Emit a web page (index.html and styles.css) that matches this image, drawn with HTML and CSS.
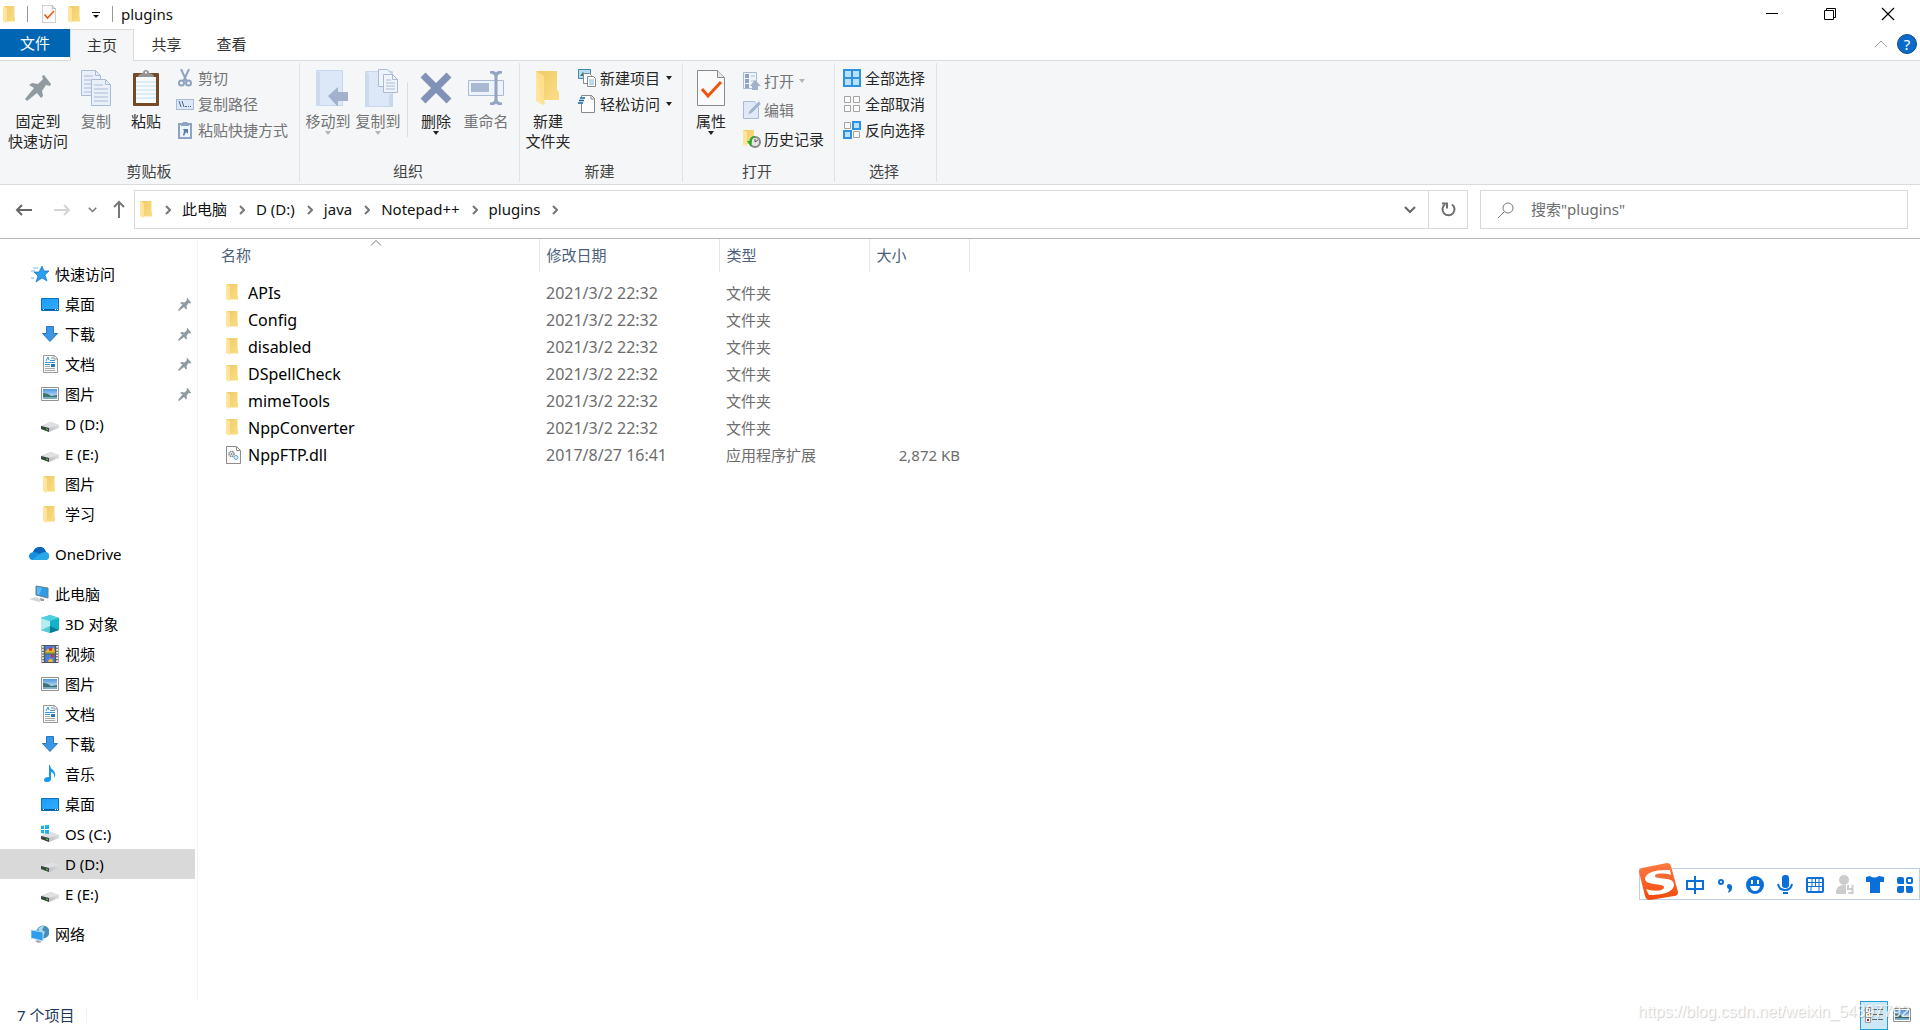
FILE: index.html
```html
<!DOCTYPE html>
<html lang="zh-CN">
<head>
<meta charset="utf-8">
<meta name="viewport" content="width=device-width, initial-scale=1">
<title>plugins</title>
<link rel="stylesheet" href="styles.css">
</head>
<body>
<svg class="sprite" aria-hidden="true">
  <defs>
    <linearGradient id="g-fold" x1="0" x2="1" y1="0" y2="1"><stop offset="0" stop-color="#efcb68"/><stop offset="1" stop-color="#fbdd85"/></linearGradient>
    <linearGradient id="g-blue" x1="0" x2="1" y1="0" y2="1"><stop offset="0" stop-color="#1a9bfa"/><stop offset="1" stop-color="#35adff"/></linearGradient>
    <linearGradient id="g-sky" x1="0" x2="0" y1="0" y2="1"><stop offset="0" stop-color="#4d97e0"/><stop offset="1" stop-color="#e8f4fb"/></linearGradient>
    <linearGradient id="g-drive" x1="0" x2="1" y1="0" y2="0"><stop offset="0" stop-color="#a5a6aa"/><stop offset="1" stop-color="#dcdde0"/></linearGradient>
    <linearGradient id="g-orange" x1="0" x2="0" y1="0" y2="1"><stop offset="0" stop-color="#ff7a42"/><stop offset="1" stop-color="#f04a0c"/></linearGradient>
  </defs>
  <symbol id="folder" viewBox="0 0 12 17"><path d="M1 0h10.500v11l.5.500v4H3z" fill="url(#g-fold)"/><path d="M0 0l4 2v12.500l-1 2.500L0 15z" fill="#ffe59c"/></symbol>
  <symbol id="bigfolder" viewBox="0 0 24 35"><path d="M0 0h21v19l2 2v8H5z" fill="url(#g-fold)"/><path d="M0 0l8 5v24l-1 5-7-4z" fill="#ffe59c"/><path d="M0 0l8 5v24l2 4-3 1z" fill="#fbd97c" opacity=".5"/></symbol>
  <symbol id="checkdoc" viewBox="0 0 28 36"><path d="M.5.500h20l7 7v28H.5z" fill="#fafafa" stroke="#8b8b8b"/><path d="M20.500.500v7h7" fill="#e6e6e6" stroke="#8b8b8b"/><path d="M5 19l6 7 13-14" fill="none" stroke="#ef5310" stroke-width="3"/></symbol>
  <symbol id="pin" viewBox="0 0 26 26"><path d="M0 24l9-11-5-3 3-2 6 1 5-5-1-3 2-1 7 9-1 2-4-1-4 6 1 5-2 2-4-5L2 26z" fill="#8f9ba1"/></symbol>
  <symbol id="copy" viewBox="0 0 30 36"><g fill="#e9f0fa" stroke="#a9bad5"><path d="M.5.500h14l5 5v20H.5z"/><path d="M14.500.500v5h5M3 6h9M3 10h13M3 14h13M3 18h13M3 22h13" fill="none"/><path d="M10.500 9.500h14l5 5v21h-19z"/><path d="M24.500 9.500v5h5M13 15h9M13 19h14M13 23h14M13 27h14M13 31h14" fill="none"/></g></symbol>
  <symbol id="paste" viewBox="0 0 26 36"><rect y="3" width="26" height="33" rx="1" fill="#754a25"/><path d="M3 7h20v26H3z" fill="#f9fcff"/><path d="M3 12h20M3 16h20M3 20h20M3 24h20M3 28h20" stroke="#b9dff5"/><path d="M5 7q0-3 5-4 0-3 3-3t3 3q5 1 5 4z" fill="#949494"/><circle cx="13" cy="2.500" r="1" fill="#fff"/></symbol>
  <symbol id="cut" viewBox="0 0 18 18"><g fill="none" stroke="#8ea3c2" stroke-width="2"><path d="M5 0l5.500 12M13 0L7.500 12"/><circle cx="5.500" cy="14" r="2.500"/><circle cx="12.500" cy="14" r="2.500"/></g></symbol>
  <symbol id="path" viewBox="0 0 18 18"><rect x=".5" y="4.500" width="17" height="10" fill="#dce7f7" stroke="#a9bad5"/><path d="M3 6l2 6M6 6l2 6M9 11.500h2M12 11.500h1M14 11.500h1" stroke="#47658f"/></symbol>
  <symbol id="shortcut" viewBox="0 0 18 18"><rect x="3" y="3" width="12" height="14" fill="#eef4fc" stroke="#8ea3c2" stroke-width="2"/><path d="M5 3l2-2h4l2 2v2H5z" fill="#8ea3c2"/><path d="M7 8h5v5l-2-2-2 4-1-1 1-4z" fill="#5a7dae"/></symbol>
  <symbol id="moveto" viewBox="0 0 32 36"><path d="M.5.500h26v35H.5z" fill="#dce7f7" stroke="#c9d7ec"/><path d="M0 0l4 3v33H0z" fill="#ccdaee"/><path d="M12 26l10-9v5h10v9H22v6z" fill="#a2b2cc"/></symbol>
  <symbol id="copyto" viewBox="0 0 34 38"><path d="M.5 2.500h27v35H.5z" fill="#dce7f7" stroke="#c9d7ec"/><path d="M0 2l4 3v33H0z" fill="#ccdaee"/><path d="M24 28q0-3 2-3t2 3v10h-4z" fill="#c9d7ec"/><g fill="#eff4fb" stroke="#a9bad5"><path d="M13.500.500h9l4 4v13h-13z"/><path d="M18.500 5.500h9l5 5v13h-14zM27.500 5.500v5h5M21 11h5M21 14h9M21 17h9M21 20h9"/></g></symbol>
  <symbol id="delete" viewBox="0 0 32 32"><path d="M3 3l26 26M29 3L3 29" stroke="#8093b7" stroke-width="7" /></symbol>
  <symbol id="rename" viewBox="0 0 36 34"><path d="M.5 9.500h35v15H.5z" fill="#edf3fc" stroke="#a9bad5"/><path d="M3 12h18v9H3z" fill="#a9b9d4"/><path d="M22 1q6 0 6 5v22q0 5-6 5M34 1q-6 0-6 5v22q0 5 6 5" fill="none" stroke="#91a5c3" stroke-width="3"/></symbol>
  <symbol id="newitem" viewBox="0 0 18 18"><path d="M.5.500h12v9H.5z" fill="#b6ddf3" stroke="#3e88ae"/><path d="M2 7l3-4 3 4z" fill="#3d7c60"/><path d="M5.500 4.500h6l2 2v8h-8z" fill="#fff" stroke="#888"/><path d="M9.500 7.500h6l2 2v8h-8z" fill="#fff" stroke="#888"/><path d="M11 11h5M11 13h5M11 15h5" stroke="#74b4e4"/></symbol>
  <symbol id="easy" viewBox="0 0 18 18"><path d="M3.500.500h10l3 3v14h-13z" fill="#fdfdfd" stroke="#888"/><path d="M13 0v4h4" fill="none" stroke="#888"/><path d="M0 5.500h5" stroke="#f5f6f7" stroke-width="7"/><path d="M2 3h5M1 5.500h5M0 8h5" stroke="#1463a5" stroke-width="1.500"/></symbol>
  <symbol id="open" viewBox="0 0 18 18"><path d="M.5.500h13v16H.5z" fill="#eff4fb" stroke="#a9bad5"/><path d="M2 2h4v4H2zM2 7h4v4H2zM2 12h4v4H2z" fill="#91a5c3"/><path d="M8 4h4M8 9h4" stroke="#a9bad5"/><path d="M12 8l6 6h-3v4H9v-4H7z" fill="#a0b1cc"/></symbol>
  <symbol id="edit" viewBox="0 0 18 18"><path d="M.5.500h11l4 4v13H.5z" fill="#dfe9f7" stroke="#a9bad5"/><path d="M5 14l1-4L16 0l2 3L9 12z" fill="#a0b4d0" stroke="#eef4fc" stroke-width=".5"/></symbol>
  <symbol id="history" viewBox="0 0 18 18"><path d="M0 0h11v14H3z" fill="url(#g-fold)"/><path d="M0 0l4 2v14l-4-1z" fill="#ffe59c"/><circle cx="12" cy="12" r="5" fill="#e6e6e6" stroke="#888" stroke-width="2"/><path d="M12 9v3l3-2" fill="none" stroke="#555"/><path d="M12 6q-5 0-5 5H4l4 6 1-6q0-3 3-4z" fill="#28ac2c"/></symbol>
  <symbol id="selall" viewBox="0 0 18 18"><path d="M1 1h16v16H1zM9 0v18M0 9h18" fill="#b7e1ff" stroke="#2d92e3" stroke-width="2"/></symbol>
  <symbol id="selnone" viewBox="0 0 18 18"><path d="M1.500 1.500h6v6h-6zM10.500 1.500h6v6h-6zM1.500 10.500h6v6h-6zM10.500 10.500h6v6h-6z" fill="#f9f9f9" stroke="#a3a3a3"/></symbol>
  <symbol id="selinv" viewBox="0 0 18 18"><path d="M1.500 1.500h6v6h-6zM10.500 10.500h6v6h-6z" fill="#f9f9f9" stroke="#a3a3a3"/><path d="M10 1h7v7h-7zM1 10h7v7H1z" fill="#b7e1ff" stroke="#2d92e3" stroke-width="2"/></symbol>
  <symbol id="star" viewBox="0 0 18 18"><path d="M11 1l2 5h5l-4 4 2 6-5-3-6 4 2-6-4-4h5z" fill="#2b9ef0" stroke="#1577be" stroke-width=".7"/><path d="M2 3h5M0 6h4M0 13h3" stroke="#69bdf5"/></symbol>
  <symbol id="desktop" viewBox="0 0 18 18"><path d="M.5 3.500h17v12H.5z" fill="url(#g-blue)" stroke="#0a72bd"/><path d="M1 14.500h16" stroke="#075b9d"/><path d="M2 14.500h1M14 14.500h1M16 14.500h1" stroke="#fff"/></symbol>
  <symbol id="down" viewBox="0 0 18 18"><path d="M5.500 1.500h7v7h4L9 16.500 1.500 8.500h4z" fill="#3b96e5" stroke="#2879c2"/></symbol>
  <symbol id="doc" viewBox="0 0 18 18"><path d="M2.500.500h11l3 3v14h-14z" fill="#fafafa" stroke="#999"/><path d="M13 0v4h4" fill="none" stroke="#999"/><path d="M5 6l2-4 1 3M10 3h2M9 5.500h5M4 7.500h10M4 9.500h5" stroke="#3a97d8" fill="none"/><path d="M4 11.500h5M4 13.500h10M4 15.500h10" stroke="#aaa"/><path d="M10 9h4v3h-4z" fill="#2879b9"/></symbol>
  <symbol id="picture" viewBox="0 0 18 18"><path d="M.5 2.500h17v13H.5z" fill="#fff" stroke="#929292"/><path d="M2 4h14v10H2z" fill="url(#g-sky)"/><path d="M2 8q5 0 8 3l6-1v4H2z" fill="#3c756e"/><path d="M2 12h14v2H2z" fill="#7aaec5"/></symbol>
  <symbol id="drive" viewBox="0 0 18 18"><path d="M0 11l10-4 8 3v3l-10 4-8-3z" fill="url(#g-drive)"/><path d="M0 11l10-4 8 3-10 3z" fill="#e0e1e4"/><path d="M0 11l8 2v4l-8-3z" fill="#3e4441"/><path d="M5 14l2 .5" stroke="#3fdc45"/></symbol>
  <symbol id="osdrive" viewBox="0 0 18 18"><use href="#drive"/><path d="M0 1l3-.5V4H0zM4 .3L8 0v4H4zM0 5h3v3.500l-3-.5zM4 5h4v4l-4-.5z" fill="#14b5ef"/></symbol>
  <symbol id="cloud" viewBox="0 0 20 14"><path d="M4 13q-4 0-4-4 0-3 4-4 2-5 7-5 4 0 6 5 3 1 3 4 0 4-4 4z" fill="#1490df"/><path d="M4 5q2-5 7-5 4 0 6 5-4 0-6 2-3-2-7-2z" fill="#0a64ba"/><path d="M3 13l8-6q3-2 6-2 3 1 3 4 0 4-4 4z" fill="#28a8ea"/></symbol>
  <symbol id="pc" viewBox="0 0 20 18"><path d="M7 1l12 2v10L7 10z" fill="#2e9ce9" stroke="#6c7f8b"/><path d="M8 2l5 1-3 7-2-1z" fill="#5abdf7"/><path d="M0 14l7-2 7 3-4 2z" fill="#d3d5d7"/><path d="M11 13l4 1v2h-3z" fill="#999"/></symbol>
  <symbol id="cube" viewBox="0 0 18 18"><path d="M9 0l9 3v12l-9 3-9-3V3z" fill="#12b2cb"/><path d="M0 3l9 3v12l-9-3z" fill="#b4eef2"/><path d="M9 0l9 3-9 3-9-3z" fill="#4fd0df"/><path d="M9 11l9 4-9 3z" fill="#087e95"/><path d="M9 11l-9 4 9 3z" fill="#57cbd5"/></symbol>
  <symbol id="film" viewBox="0 0 18 19"><path d="M0 0h18v19H0z" fill="#555"/><path d="M1.500 1v18M16.500 1v18" stroke="#eee" stroke-width="2" stroke-dasharray="2 1"/><path d="M4 1h10v8H4zM4 10h10v8H4z" fill="#4b7fe2"/><path d="M4 7l3-3 3 2 3-4 1 4v3H4zM7 17q2-5 5-1v2H7z" fill="#f0b629"/><path d="M8 3h3v3H8zM10 10h3v3h-3z" fill="#c7392c"/><path d="M4 8h10v1H4z" fill="#3e8b36"/></symbol>
  <symbol id="music" viewBox="0 0 18 18"><path d="M9 0q0 3 3 5 4 4 1 8 1-5-3-6v7q0 3-4 3-3 0-3-2 0-3 5-3V0z" fill="#1799f0"/></symbol>
  <symbol id="network" viewBox="0 0 18 18"><circle cx="12" cy="7" r="6.500" fill="#478fb6"/><path d="M7 4q4-4 6-3l-2 4 3 2-2 4z" fill="#a9dcec"/><path d="M0 5l12 2v9L0 13z" fill="#2f9ced" stroke="#b6dcf0"/><path d="M4 16l3-1 4 2-4 1z" fill="#aaa"/></symbol>
  <symbol id="dll" viewBox="0 0 15 18"><path d="M.5.500h10l4 4v13H.5z" fill="#fafafa" stroke="#8b8b8b"/><path d="M10.500.500v4h4" fill="none" stroke="#8b8b8b"/><circle cx="5.500" cy="8" r="2.500" fill="none" stroke="#858b90" stroke-width="1.500" stroke-dasharray="1.500 .5"/><circle cx="5.500" cy="8" r="1" fill="#858b90"/><circle cx="10" cy="11.500" r="2" fill="#d6edfb" stroke="#6ca9d1"/></symbol>
  <symbol id="chev" viewBox="0 0 6 10"><path d="M1 1l4 4-4 4" fill="none" stroke="#777" stroke-width="2"/></symbol>
  <symbol id="vchev" viewBox="0 0 12 8"><path d="M1 1l5 5 5-5" fill="none" stroke="currentColor" stroke-width="2"/></symbol>
</svg>

<header class="titlebar">
  <div class="quick">
    <svg class="ic-folder"><use href="#folder"/></svg>
    <span class="tsep"></span>
    <button class="plain" aria-label="属性"><svg class="ic-check"><use href="#checkdoc"/></svg></button>
    <button class="plain" aria-label="新建文件夹"><svg class="ic-folder"><use href="#folder"/></svg></button>
    <button class="plain qmenu" aria-label="自定义快速访问工具栏"><svg width="8" height="7"><path d="M0 1.500h8" stroke="#111"/><path d="M1 4h6L4 7z" fill="#111"/></svg></button>
    <span class="tsep"></span>
  </div>
  <h1>plugins</h1>
  <div class="winctl">
    <button class="plain" aria-label="最小化"><svg width="12" height="12"><path d="M0 5.500h12" stroke="#000"/></svg></button>
    <button class="plain" aria-label="还原"><svg width="12" height="12"><path d="M.5 2.500h9v9h-9zM2.500 2.500v-2h9v9h-2" fill="none" stroke="#000"/></svg></button>
    <button class="plain" aria-label="关闭"><svg width="12" height="12"><path d="M0 0l12 12M12 0L0 12" stroke="#000" stroke-width="1.200"/></svg></button>
  </div>
</header>

<nav class="tabs">
  <button class="tab file">文件</button>
  <button class="tab active">主页</button>
  <button class="tab">共享</button>
  <button class="tab">查看</button>
  <div class="tabs-end">
    <button class="plain" aria-label="最小化功能区"><svg width="12" height="8"><path d="M0 7l6-6 6 6" fill="none" stroke="#999"/></svg></button>
    <button class="help" aria-label="帮助">?</button>
  </div>
</nav>

<section class="ribbon">
  <div class="group clip">
    <div class="tools">
      <button class="big pinb"><span class="slot"><svg width="26" height="26"><use href="#pin"/></svg></span>固定到<br>快速访问</button>
      <button class="big copyb off"><span class="slot"><svg width="30" height="36"><use href="#copy"/></svg></span>复制</button>
      <button class="big pasteb"><span class="slot"><svg width="26" height="36"><use href="#paste"/></svg></span>粘贴</button>
      <div class="smalls">
        <button class="small off"><svg><use href="#cut"/></svg>剪切</button>
        <button class="small off"><svg><use href="#path"/></svg>复制路径</button>
        <button class="small off"><svg><use href="#shortcut"/></svg>粘贴快捷方式</button>
      </div>
    </div>
    <div class="caption">剪贴板</div>
  </div>
  <div class="group org">
    <div class="tools">
      <button class="big off"><span class="slot wideslot"><svg width="32" height="36"><use href="#moveto"/></svg></span>移动到<i class="arrow"></i></button>
      <button class="big off"><span class="slot wideslot"><svg width="34" height="38"><use href="#copyto"/></svg></span>复制到<i class="arrow"></i></button>
      <span class="rule"></span>
      <button class="big"><span class="slot"><svg width="32" height="32"><use href="#delete"/></svg></span>删除<i class="arrow"></i></button>
      <button class="big off"><span class="slot"><svg width="36" height="34"><use href="#rename"/></svg></span>重命名</button>
    </div>
    <div class="caption">组织</div>
  </div>
  <div class="group new">
    <div class="tools">
      <button class="big"><span class="slot"><svg width="24" height="35"><use href="#bigfolder"/></svg></span>新建<br>文件夹</button>
      <div class="smalls">
        <button class="small"><svg><use href="#newitem"/></svg>新建项目<i class="arrow"></i></button>
        <button class="small"><svg><use href="#easy"/></svg>轻松访问<i class="arrow"></i></button>
      </div>
    </div>
    <div class="caption">新建</div>
  </div>
  <div class="group opn">
    <div class="tools">
      <button class="big"><span class="slot"><svg width="28" height="36"><use href="#checkdoc"/></svg></span>属性<i class="arrow"></i></button>
      <div class="smalls roomy">
        <button class="small off"><svg><use href="#open"/></svg>打开<i class="arrow"></i></button>
        <button class="small off"><svg><use href="#edit"/></svg>编辑</button>
        <button class="small"><svg><use href="#history"/></svg>历史记录</button>
      </div>
    </div>
    <div class="caption">打开</div>
  </div>
  <div class="group sel">
    <div class="tools">
      <div class="smalls">
        <button class="small"><svg><use href="#selall"/></svg>全部选择</button>
        <button class="small"><svg><use href="#selnone"/></svg>全部取消</button>
        <button class="small"><svg><use href="#selinv"/></svg>反向选择</button>
      </div>
    </div>
    <div class="caption">选择</div>
  </div>
</section>

<div class="navbar">
  <div class="history">
    <button class="plain" aria-label="返回"><svg width="16" height="12"><path d="M16 6H1M6 1L1 6l5 5" fill="none" stroke="#666" stroke-width="2"/></svg></button>
    <button class="plain" aria-label="前进"><svg width="16" height="12"><path d="M0 6h15M10 1l5 5-5 5" fill="none" stroke="#d5d5d5" stroke-width="2"/></svg></button>
    <button class="plain recent" aria-label="最近浏览的位置"><svg width="9" height="6"><use href="#vchev"/></svg></button>
    <button class="plain up" aria-label="上移"><svg width="12" height="17"><path d="M6 17V1M1 6l5-5 5 5" fill="none" stroke="#777" stroke-width="2"/></svg></button>
  </div>
  <div class="address">
    <svg class="ic-folder"><use href="#folder"/></svg>
    <svg class="crumb-sep"><use href="#chev"/></svg><a href="#">此电脑</a>
    <svg class="crumb-sep"><use href="#chev"/></svg><a href="#">D (D:)</a>
    <svg class="crumb-sep"><use href="#chev"/></svg><a href="#">java</a>
    <svg class="crumb-sep"><use href="#chev"/></svg><a href="#">Notepad++</a>
    <svg class="crumb-sep"><use href="#chev"/></svg><a href="#">plugins</a>
    <svg class="crumb-sep"><use href="#chev"/></svg>
    <button class="plain drop" aria-label="以前的位置"><svg width="12" height="8"><use href="#vchev"/></svg></button>
    <button class="plain refresh" aria-label="刷新"><svg width="16" height="16"><path d="M12 2.500a6 6 0 1 1-7 0" fill="none" stroke="#6e6e6e" stroke-width="2"/><path d="M2 1.500h5v5" fill="none" stroke="#6e6e6e" stroke-width="2"/></svg></button>
  </div>
  <label class="search">
    <svg width="16" height="16"><circle cx="10" cy="6" r="5" fill="none" stroke="#777"/><path d="M6.500 9.500L0 16" stroke="#777"/></svg>
    <input type="text" placeholder='搜索"plugins"' aria-label="搜索">
  </label>
</div>

<main class="body">
  <nav class="tree">
    <ul>
      <li><a href="#" class="root"><svg><use href="#star"/></svg>快速访问</a></li>
      <li><a href="#"><svg><use href="#desktop"/></svg>桌面<svg class="pinned"><use href="#pin"/></svg></a></li>
      <li><a href="#"><svg><use href="#down"/></svg>下载<svg class="pinned"><use href="#pin"/></svg></a></li>
      <li><a href="#"><svg><use href="#doc"/></svg>文档<svg class="pinned"><use href="#pin"/></svg></a></li>
      <li><a href="#"><svg><use href="#picture"/></svg>图片<svg class="pinned"><use href="#pin"/></svg></a></li>
      <li><a href="#"><svg><use href="#drive"/></svg>D (D:)</a></li>
      <li><a href="#"><svg><use href="#drive"/></svg>E (E:)</a></li>
      <li><a href="#"><svg class="ic-folder"><use href="#folder"/></svg>图片</a></li>
      <li><a href="#"><svg class="ic-folder"><use href="#folder"/></svg>学习</a></li>
    </ul>
    <ul>
      <li><a href="#" class="root wide"><svg class="ic-cloud"><use href="#cloud"/></svg>OneDrive</a></li>
    </ul>
    <ul>
      <li><a href="#" class="root wide"><svg><use href="#pc"/></svg>此电脑</a></li>
      <li><a href="#"><svg><use href="#cube"/></svg>3D 对象</a></li>
      <li><a href="#"><svg><use href="#film"/></svg>视频</a></li>
      <li><a href="#"><svg><use href="#picture"/></svg>图片</a></li>
      <li><a href="#"><svg><use href="#doc"/></svg>文档</a></li>
      <li><a href="#"><svg><use href="#down"/></svg>下载</a></li>
      <li><a href="#"><svg><use href="#music"/></svg>音乐</a></li>
      <li><a href="#"><svg><use href="#desktop"/></svg>桌面</a></li>
      <li><a href="#"><svg><use href="#osdrive"/></svg>OS (C:)</a></li>
      <li><a href="#" class="current"><svg><use href="#drive"/></svg>D (D:)</a></li>
      <li><a href="#"><svg><use href="#drive"/></svg>E (E:)</a></li>
    </ul>
    <ul>
      <li><a href="#" class="root"><svg><use href="#network"/></svg>网络</a></li>
    </ul>
  </nav>
  <section class="files">
    <table>
      <colgroup><col class="c-name"><col class="c-date"><col class="c-type"><col class="c-size"></colgroup>
      <thead><tr>
        <th class="sorted">名称<svg class="sort" width="10" height="6"><path d="M0 5.500l5-5 5 5" fill="none" stroke="#777"/></svg></th>
        <th>修改日期</th><th>类型</th><th>大小</th>
      </tr></thead>
      <tbody>
        <tr><td><span class="name"><svg class="ic-folder"><use href="#folder"/></svg>APIs</span></td><td class="date">2021/3/2 22:32</td><td>文件夹</td><td></td></tr>
        <tr><td><span class="name"><svg class="ic-folder"><use href="#folder"/></svg>Config</span></td><td class="date">2021/3/2 22:32</td><td>文件夹</td><td></td></tr>
        <tr><td><span class="name"><svg class="ic-folder"><use href="#folder"/></svg>disabled</span></td><td class="date">2021/3/2 22:32</td><td>文件夹</td><td></td></tr>
        <tr><td><span class="name"><svg class="ic-folder"><use href="#folder"/></svg>DSpellCheck</span></td><td class="date">2021/3/2 22:32</td><td>文件夹</td><td></td></tr>
        <tr><td><span class="name"><svg class="ic-folder"><use href="#folder"/></svg>mimeTools</span></td><td class="date">2021/3/2 22:32</td><td>文件夹</td><td></td></tr>
        <tr><td><span class="name"><svg class="ic-folder"><use href="#folder"/></svg>NppConverter</span></td><td class="date">2021/3/2 22:32</td><td>文件夹</td><td></td></tr>
        <tr><td><span class="name"><svg class="ic-dll"><use href="#dll"/></svg>NppFTP.dll</span></td><td class="date">2017/8/27 16:41</td><td>应用程序扩展</td><td>2,872 KB</td></tr>
      </tbody>
    </table>
  </section>
</main>

<footer class="status">
  <span class="count">7 个项目</span>
  <div class="views">
    <button class="view on" aria-label="详细信息"><svg width="18" height="18"><path d="M.5 1.500h5v5h-5zM.5 6.500h5v5h-5zM.5 11.500h5v5h-5z" fill="#fff" stroke="#999"/><path d="M2 3h2v2H2z" fill="#4b9cdb"/><path d="M2 8h2v2H2z" fill="#b98b3c"/><path d="M2 13h2v2H2z" fill="#b5281e"/><path d="M7 3.500h5M13 3.500h5M7 8.500h5M13 8.500h5M7 13.500h5M13 13.500h5" stroke="#666"/></svg></button>
    <button class="view" aria-label="大图标"><svg width="18" height="18"><use href="#picture"/></svg></button>
  </div>
  <span class="watermark">https://blog.csdn.net/weixin_54397792</span>
</footer>

<div class="ime">
  <svg class="ime-logo" viewBox="0 0 40 38"><path d="M3 5L28 0q3 0 4 3l7 26q0 4-4 4l-24 4q-4 0-5-4L0 9q0-3 3-4z" fill="url(#g-orange)"/><path d="M32 12L31 7Q9 6 6 15c-1 8 19 5 19 9 0 5-12 4-18 2l3 6c12 0 24-2 25-10 1-9-19-5-19-9 0-3 10-3 16-1z" fill="#fff"/></svg>
  <button class="plain" aria-label="中文"><svg viewBox="0 0 20 20"><path d="M2 6h16v8H2zM10 1v18" fill="none" stroke="#0a6fd8" stroke-width="2"/></svg></button>
  <button class="plain" aria-label="标点"><svg viewBox="0 0 20 20"><circle cx="6" cy="7" r="2" fill="none" stroke="#0a6fd8" stroke-width="2"/><path d="M12 11q0-2 2-2t3 2q1 5-4 7l1-4q-2 0-2-3z" fill="#0a6fd8"/></svg></button>
  <button class="plain" aria-label="表情"><svg viewBox="0 0 20 20"><circle cx="10" cy="10" r="9" fill="#0a6fd8"/><path d="M5 11h10q-1 5-5 5t-5-5z" fill="#fff"/><path d="M7 5v4M13 5v4" stroke="#fff" stroke-width="2"/></svg></button>
  <button class="plain" aria-label="语音"><svg viewBox="0 0 20 20"><rect x="7" y="0" width="7" height="13" rx="3" fill="#0a6fd8"/><path d="M3 9q1 6 7 6t7-6" fill="none" stroke="#0a6fd8" stroke-width="2"/><path d="M8 17h5v2H8z" fill="#0a6fd8"/></svg></button>
  <button class="plain" aria-label="键盘"><svg viewBox="0 0 20 20"><rect x="2" y="3" width="16" height="14" rx="1" fill="#fff" stroke="#0a6fd8" stroke-width="2"/><path d="M3 7.500h14M3 11.500h14M7 4v8M10.500 4v8M14 4v8M6 12v4M14 12v4" stroke="#0a6fd8"/></svg></button>
  <button class="plain" aria-label="账号"><svg viewBox="0 0 20 20"><circle cx="9" cy="5" r="5" fill="#ccc"/><path d="M1 18q0-8 8-8 5 0 6 4v5H2z" fill="#ccc"/><path d="M11 9h8v10h-8z" fill="#fff"/><path d="M13 10v4h4M17.500 10v8h-4" fill="none" stroke="#ccc" stroke-width="2"/></svg></button>
  <button class="plain" aria-label="皮肤"><svg viewBox="0 0 20 20"><path d="M5 1q4 3 9 0l5 1v5h-4v11H5V7H1V2z" fill="#0a6fd8"/></svg></button>
  <button class="plain" aria-label="工具箱"><svg viewBox="0 0 20 20"><g fill="#0a6fd8"><path d="M2 4q0-2 2-2h3q2 0 2 2v5H4q-2 0-2-2zM2 13q0-2 2-2h5v5q0 2-2 2H4q-2 0-2-2zM11 11h5q2 0 2 2v3q0 2-2 2h-3q-2 0-2-2z"/></g><rect x="12" y="3" width="5" height="5" rx="1" fill="none" stroke="#0a6fd8" stroke-width="2"/></svg></button>
</div>
</body>
</html>
```

FILE: styles.css
```css
* { box-sizing: border-box; }

body {
  margin: 0;
  min-height: 100vh;
  display: flex;
  flex-direction: column;
  position: relative;
  background: #fff;
  color: #111;
  font: 15px/20px "Noto Sans", "Noto Sans CJK SC", sans-serif;
}

button, input { font: inherit; color: inherit; }
button { border: 0; background: none; padding: 0; margin: 0; }
a { color: inherit; text-decoration: none; }
svg { display: block; flex: none; overflow: visible; }
ul { list-style: none; margin: 0; padding: 0; }
.sprite { position: absolute; width: 0; height: 0; }
.plain { display: flex; align-items: center; justify-content: center; }
.ic-folder { width: 12px; height: 17px; }
.ic-check { width: 14px; height: 18px; }
.ic-dll { width: 15px; height: 18px; }

/* title bar */
.titlebar { display: flex; align-items: center; height: 29px; padding-bottom: 1px; }
.quick { display: flex; align-items: center; padding-left: 3px; gap: 12px; }
.quick .tsep + button { margin-left: 2px; }
.qmenu { width: 8px; }
.tsep { width: 1px; height: 16px; background: #999; }
.titlebar h1 { margin: 0 0 0 8px; padding-bottom: 1px; font-size: 15px; font-weight: 400; line-height: 20px; }
.winctl { display: flex; margin-left: auto; padding-right: 3px; }
.winctl button { width: 58px; height: 28px; }

/* ribbon tabs */
.tabs { display: flex; height: 32px; border-bottom: 1px solid #dadbdc; color: #333; }
.tab { width: 65px; height: 31px; padding-bottom: 2px; }
.tab.file { width: 70px; height: 28px; padding: 0; background: #0066b4; color: #fff; }
.tab.active { width: 64px; height: 32px; background: #f5f6f7; border: 1px solid #dadbdc; border-bottom: 0; }
.tabs-end { display: flex; align-items: center; gap: 10px; margin-left: auto; padding: 0 3px 2px 0; }
.help { width: 20px; height: 20px; border-radius: 50%; background: #0a6bcb; border: 1px solid #0b4d8c; color: #fff; line-height: 18px; }

/* ribbon */
.ribbon { display: flex; background: #f5f6f7; border-bottom: 1px solid #dadbdc; padding: 2px 0; color: #262626; }
.group { display: flex; flex-direction: column; border-right: 1px solid #e1e2e3; padding: 0 0 1px 3px; }
.tools { display: flex; align-items: flex-start; height: 98px; }
.caption { text-align: center; color: #444; line-height: 20px; padding-right: 6px; }
.clip { width: 300px; padding-left: 2px; }
.org { width: 220px; }
.new { width: 163px; }
.opn { width: 152px; }
.sel { width: 102px; }
.clip .caption { padding-right: 3px; }
.big { display: flex; flex-direction: column; align-items: center; width: 50px; padding-top: 6px; white-space: nowrap; line-height: 20px; }
.pinb { width: 72px; }
.copyb { width: 44px; }
.pasteb { width: 56px; }
.slot { display: flex; align-items: center; justify-content: center; height: 38px; margin-bottom: 4px; }
.wideslot { padding-left: 8px; }
.off { color: #737475; }
.arrow { border: 4px solid transparent; border-top-color: #222; border-bottom: 0; border-left-width: 3px; border-right-width: 3px; }
.off .arrow { border-top-color: #b5b5b5; }
.rule { width: 1px; height: 55px; margin: 19px 3px 0 4px; background: #dcdddf; }
.smalls { display: flex; flex-direction: column; padding: 2px 0 0 2px; }
.small { display: flex; align-items: center; gap: 4px; height: 26px; white-space: nowrap; }
.small svg { width: 18px; height: 18px; }
.roomy .small { height: 29px; gap: 3px; }
.small .arrow { margin-left: 2px; }
.new .smalls, .sel .smalls { padding-left: 5px; }
.opn .smalls { padding-top: 3px; padding-left: 7px; }

/* navigation bar */
.navbar { display: flex; align-items: center; height: 54px; padding: 0 12px 4px 0; border-bottom: 1px solid #b8b8b8; }
.history { display: flex; align-items: center; width: 134px; padding-left: 16px; gap: 22px; color: #777; }
.history .recent { width: 9px; margin-left: -4px; }
.history .up { width: 12px; margin-left: -6px; }
.address { flex: 1; display: flex; align-items: center; height: 39px; border: 1px solid #d9d9d9; padding-left: 5px; }
.address a { margin-right: 12px; padding-bottom: 2px; }
.crumb-sep { width: 6px; height: 10px; margin-right: 11px; }
.address .ic-folder { margin-right: 13px; }
.drop { margin-left: auto; width: 36px; color: #666; }
.refresh { width: 39px; height: 37px; border-left: 1px solid #d9d9d9; }
.search { display: flex; align-items: center; gap: 17px; width: 428px; height: 39px; margin-left: 12px; padding-left: 17px; border: 1px solid #d9d9d9; }
.search input { flex: 1; min-width: 0; border: 0; padding: 0 0 2px; outline: 0; background: none; }
.search input::placeholder { color: #6d6d6d; opacity: 1; }

/* body */
.body { flex: 1; display: flex; }
.tree { width: 198px; padding: 20px 2px 0 0; border-right: 1px solid #f3f3f3; color: #000; }
.tree ul { margin-bottom: 10px; }
.tree a { display: flex; align-items: center; gap: 6px; height: 30px; padding-left: 41px; }
.tree a.root { padding-left: 31px; }
.tree a.wide { padding-left: 29px; }
.tree a.current { background: #d9d9d9; }
.tree svg { width: 18px; height: 18px; }
.tree .wide svg { width: 20px; }
.tree .wide .ic-cloud { height: 14px; }
.tree .ic-folder { width: 12px; height: 17px; margin: 0 4px 0 2px; }
.tree .pinned { width: 13px; height: 13px; margin: 0 4px 0 auto; }

.files { flex: 1; min-width: 0; }
table { border-collapse: collapse; table-layout: fixed; width: 771px; }
.c-name { width: 341px; }
.c-date { width: 180px; }
.c-type { width: 150px; }
.c-size { width: 100px; }
th { position: relative; height: 33px; padding: 0 0 2px 7px; border-right: 1px solid #e5e5e5; text-align: left; font-weight: 400; color: #4c607a; }
th.sorted { padding-left: 23px; }
.sort { position: absolute; top: 1px; left: 173px; }
tbody::before { content: ""; display: block; height: 7px; }
td { height: 27px; padding: 0 0 0 7px; color: #6d6d6d; white-space: nowrap; }
td:first-child { padding-left: 28px; color: #000; }
td:last-child { padding: 0 9px 0 0; text-align: right; }
.date, .name { font-size: 16px; }
.name { display: flex; align-items: center; gap: 10px; }
.name .ic-dll { margin-right: -3px; }

/* status bar */
.status { position: relative; display: flex; align-items: center; height: 30px; padding: 0 4px 0 17px; color: #1e395b; }
.count { padding-right: 12px; border-right: 1px solid #f0f0f0; line-height: 14px; }
.views { display: flex; margin-left: auto; }
.view { display: flex; align-items: center; justify-content: center; width: 28px; height: 29px; }
.view.on { background: #cce8f6; border: 1px solid #26a0da; }
.watermark { position: absolute; right: 10px; bottom: 8px; font: 16px/20px "Liberation Sans", sans-serif; color: rgba(255, 255, 255, .8); text-shadow: 1px 1px 1px rgba(0, 0, 0, .2); pointer-events: none; }

/* input method toolbar floating over the window */
.ime { position: absolute; right: 0; bottom: 130px; display: flex; align-items: center; gap: 10px; height: 32px; padding: 1px 4px 0 45px; background: #fff; border: 1px solid #bccfe6; }
.ime button, .ime button svg { width: 20px; height: 20px; }
.ime-logo { position: absolute; left: -1px; top: -6px; width: 40px; height: 38px; }
```
